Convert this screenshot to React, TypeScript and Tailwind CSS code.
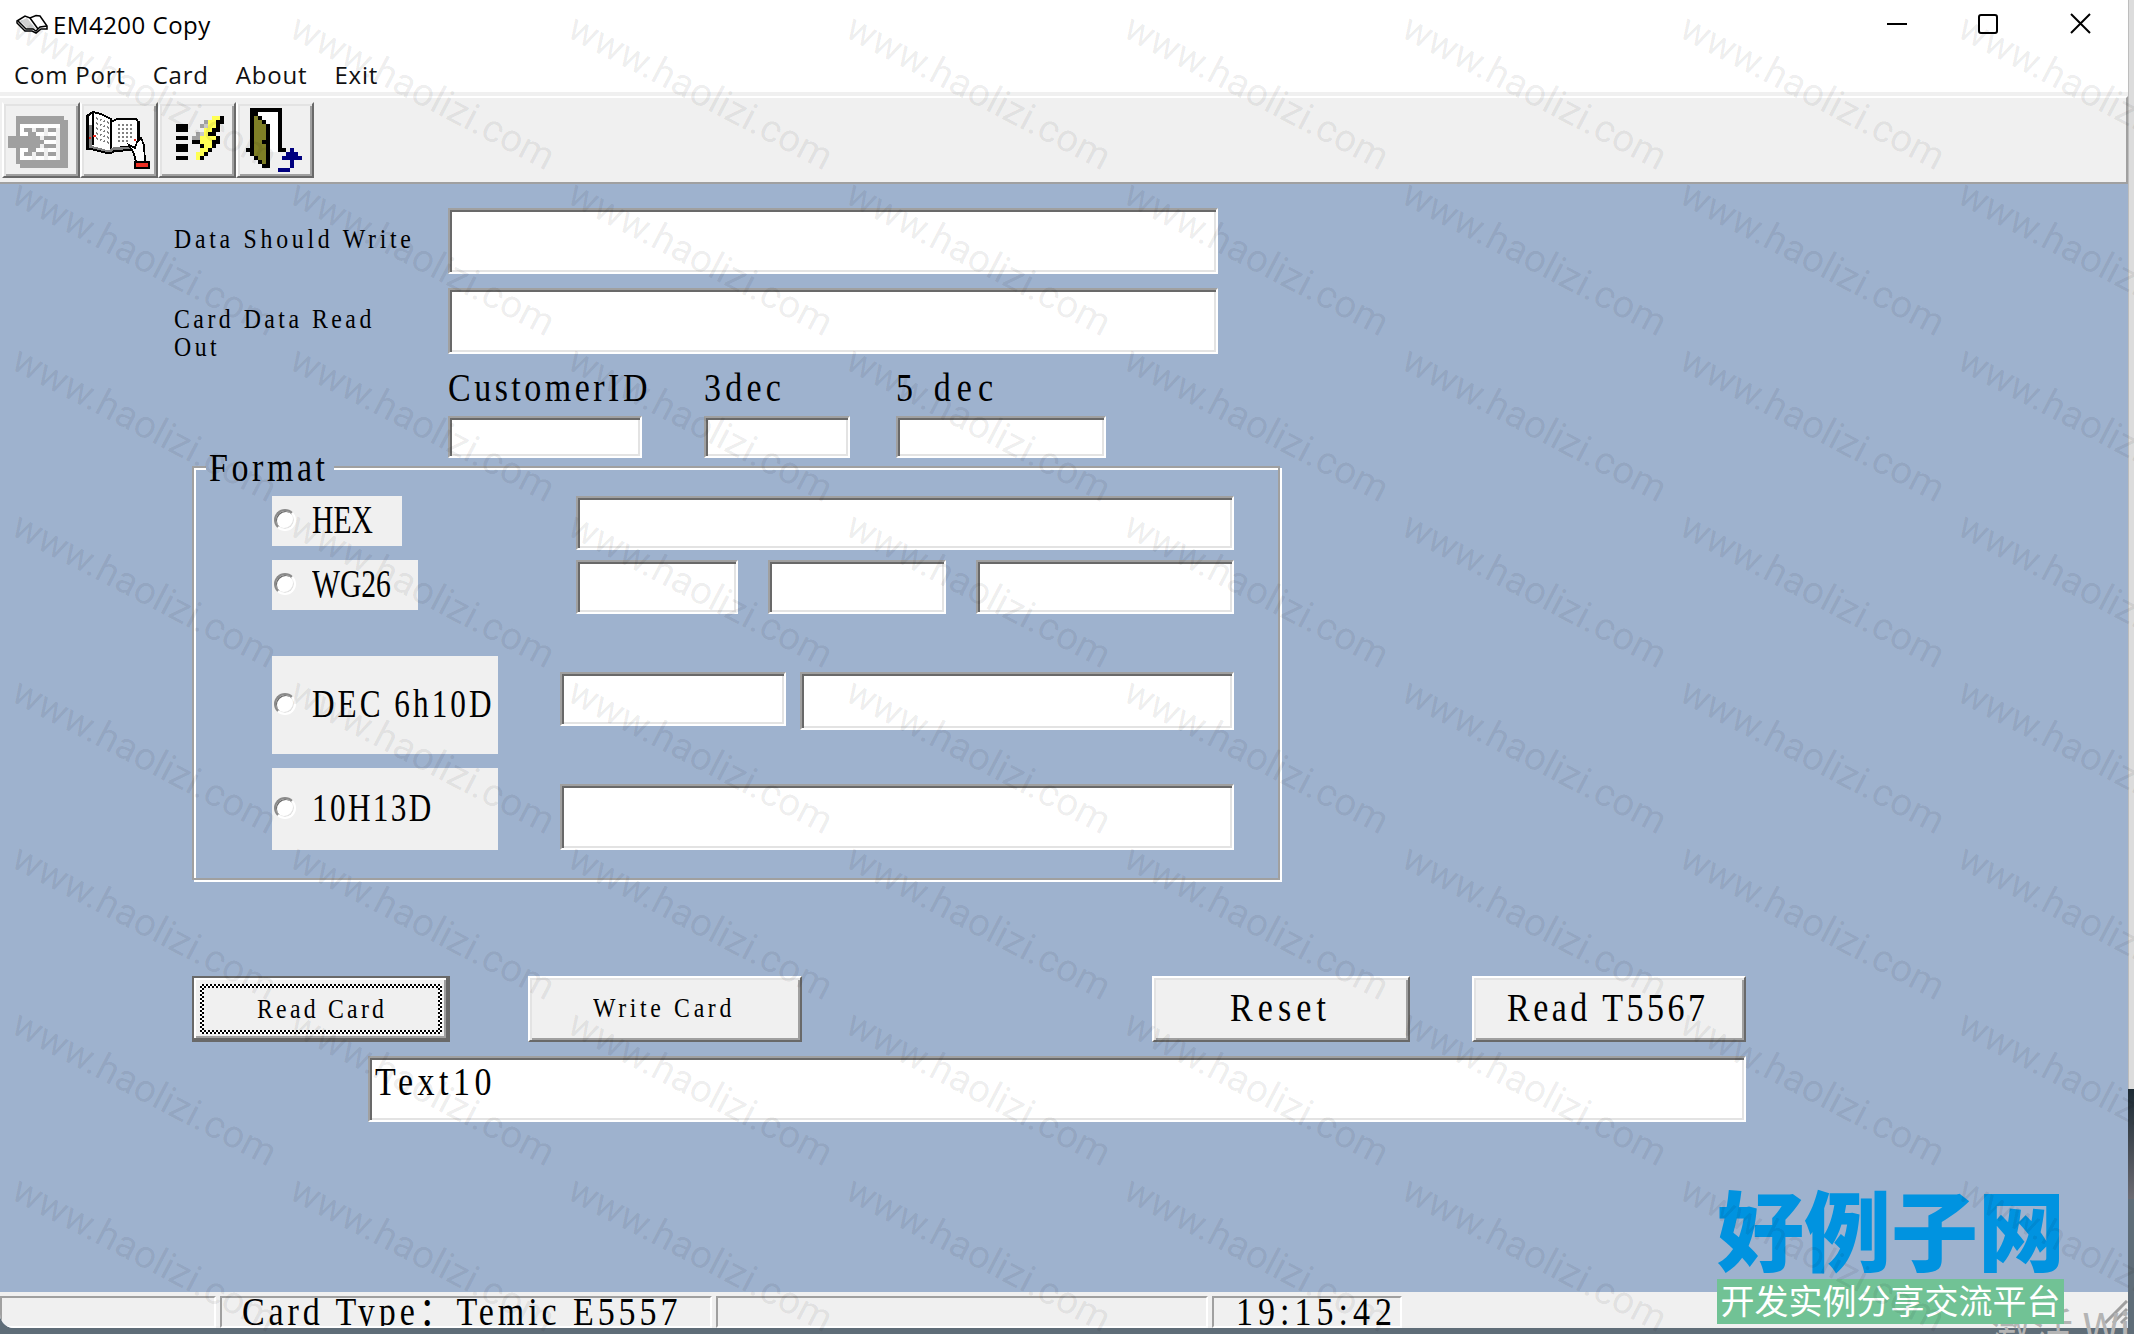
import type { ReactNode } from 'react';
import { clsx } from 'clsx';

const PALETTE: Record<string, string> = {
  B: '#000000',
  W: '#ffffff',
  Y: '#ffff54',
  G: '#a0a0a0',
  L: '#c8c8c8',
  O: '#7f7f26',
  N: '#00007f',
};

const FLASH = [
  '.........YYB',
  '.......GYYBB',
  'BBB...GLYYB.',
  'BBB....YYBB.',
  '.....GLYBB..',
  'BBB.GGYYYYB.',
  '....BBYYYBB.',
  'BBB...BYYB..',
  'BBB...YYB...',
  '.....YYB....',
  'BBB..YB.....',
];

const DOOR = [
  '.BBBBBBBB.....',
  '.BBWWWWWB.....',
  '.BOBWWWWB.....',
  '.BOOBWWWB.....',
  '.BOOOBWWB.....',
  '.BOOOBWWB.....',
  '.BOOOBWWB.....',
  '.BOOOBWWB.....',
  '.BOOBBWWB.....',
  '.BOOOBWWB.....',
  'BBOOOBWWBB.N..',
  '.BOOOB....NNN.',
  '..BOOB...NNNNN',
  '...BOB.....N..',
  '....BB.....N..',
  '........NNN...',
];

const TABLE = [
  '..GGGGGGGGGGGG.',
  '..GGGGGGGGGGGGG',
  '..GWWWWWWWWWWGG',
  '..GWGG.GG.GG.GG',
  '..GWWGGWW.WW.GG',
  'GGGGGGGG.GGG.GG',
  'GGGGGGGGGWWW.GG',
  'GGGGGGGG.GGG.GG',
  '..GWWGGWW.WW.GG',
  '..GWGG.GG.GG.GG',
  '..GWWW.WW.WW.GG',
  '..GGGGGGGGGGGGG',
  '...GGGGGGGGGGGG',
];

function PixelArt({ rows, className }: { rows: string[]; className?: string }) {
  return (
    <svg
      width={rows[0].length * 4}
      height={rows.length * 4}
      viewBox={`0 0 ${rows[0].length} ${rows.length}`}
      shapeRendering="crispEdges"
      className={className}
    >
      {rows.flatMap((row, y) =>
        row.split('').map((c, x) =>
          PALETTE[c] ? <rect key={`${x}-${y}`} x={x} y={y} width={1} height={1} fill={PALETTE[c]} /> : null
        )
      )}
    </svg>
  );
}

function BookIcon() {
  return (
    <svg width="66" height="60" viewBox="0 0 66 60" shapeRendering="crispEdges">
      <path d="M2 5 L8 1 L16 3 L26 8 V42 L6 38 H2 Z" fill="#fff" stroke="#000" strokeWidth="2" />
      <path d="M26 11 L32 8 H51 L54 12 V36 H36 L26 42 Z" fill="#fff" stroke="#000" strokeWidth="2" />
      <rect x="1" y="4" width="3" height="35" fill="#000" />
      <rect x="4" y="14" width="3" height="24" fill="#808080" />
      <rect x="7" y="2" width="2" height="32" fill="#000" />
      <path d="M5 36 L24 41 L28 38 L46 37" fill="none" stroke="#808080" strokeWidth="3" />
      <path d="M2 37 L22 42 L26 42 L30 40 L46 39" fill="none" stroke="#000" strokeWidth="2" />
      <rect x="52" y="10" width="3" height="22" fill="#000" />
      <path d="M11 7 L24 12 M11 12 L24 17 M11 17 L24 22 M11 22 L24 27 M11 27 L24 32" stroke="#808080" strokeWidth="2" strokeDasharray="2 2" />
      <path d="M33 14 H48 M33 18 H48 M33 22 H48 M33 26 H48 M33 30 H45" stroke="#808080" strokeWidth="2" strokeDasharray="2 2" />
      <rect x="4" y="26" width="2" height="2" fill="#e3271d" />
      <rect x="8" y="24" width="3" height="2" fill="#e3271d" />
      <rect x="49" y="28" width="2" height="2" fill="#e3271d" />
      <path d="M44 34 L50 37 L52 31 L56 27 L59 34 L60 51 H51 L49 43 Z" fill="#fff" stroke="#000" strokeWidth="1.8" />
      <rect x="50" y="51" width="14" height="6" fill="#ef3024" stroke="#000" strokeWidth="2" />
    </svg>
  );
}

function TitleIcon() {
  return (
    <svg width="32" height="22" viewBox="0 0 32 22">
      <path d="M1 7 L9 2 L14 4 L20 1.5 L24 2 L31 12 V15 L25 15 L20 19 L16 17 L9 17 L1 9 Z" fill="#fff" stroke="#000" strokeWidth="1.5" />
      <path d="M4 7 L11 4 L20 15 L12 15 Z" fill="#d0d0d0" />
      <path d="M14 4 L22 15 M2 7 L10 15 L17 15 L20 17 L24 13 L31 12" fill="none" stroke="#000" strokeWidth="1.5" />
    </svg>
  );
}

function ToolButton({ children }: { children: ReactNode }) {
  return (
    <button className="relative w-[78px] h-[76px] bg-[#f0f0f0] border-2 border-t-[#f0f0f0] border-l-white border-r-[#696969] border-b-[#696969] shadow-[inset_2px_2px_#e3e3e3,inset_-2px_-2px_#a0a0a0]">
      {children}
    </button>
  );
}

function TextBox({ className, children }: { className: string; children?: ReactNode }) {
  return (
    <div
      className={clsx(
        'shrink-0 bg-white border-2 border-t-[#a0a0a0] border-l-[#a0a0a0] border-r-white border-b-white shadow-[inset_2px_2px_#696969,inset_-2px_-2px_#e3e3e3]',
        className
      )}
    >
      {children}
    </div>
  );
}

// Narrow serif lettering used by the form labels
function Label({ children, className }: { children: ReactNode; className?: string }) {
  return <span className={clsx('inline-block origin-left scale-x-[0.85] whitespace-nowrap', className)}>{children}</span>;
}

function PushButton({ children, className }: { children: ReactNode; className: string }) {
  return (
    <button
      className={clsx(
        'h-[66px] shrink-0 bg-[#f0f0f0] pb-[2px] text-left border-2 border-t-white border-l-white border-r-[#696969] border-b-[#696969] shadow-[inset_2px_2px_#e3e3e3,inset_-2px_-2px_#a0a0a0]',
        className
      )}
    >
      {children}
    </button>
  );
}

function Option({ label, className, textClass }: { label: string; className: string; textClass: string }) {
  return (
    <label className={clsx('flex shrink-0 items-center bg-[#f0f0f0] pb-[2px] pl-[2px]', className)}>
      <span className="size-[22px] shrink-0 rounded-full bg-white border-2 border-t-[#8a8a8a] border-l-[#8a8a8a] border-r-white border-b-white shadow-[inset_1px_1px_#696969,inset_-1px_-1px_#e3e3e3]" />
      <span className={clsx('ml-4 origin-left whitespace-nowrap text-[40px] leading-[40px]', textClass)}>{label}</span>
    </label>
  );
}

function StatusPanel({ children, className }: { children?: ReactNode; className: string }) {
  return (
    <div
      className={clsx(
        'h-8 shrink-0 overflow-hidden whitespace-nowrap border-2 border-t-[#a0a0a0] border-l-[#a0a0a0] border-r-white border-b-white text-[40px] leading-[28px]',
        className
      )}
    >
      {children}
    </div>
  );
}

function Watermark() {
  return (
    <div className="pointer-events-none absolute inset-0 grid auto-rows-[166px] grid-cols-[repeat(8,278px)] overflow-hidden pl-[5px]">
      {Array.from({ length: 64 }, (_, i) => (
        <span
          key={i}
          className="h-[44px] w-0 origin-bottom-left rotate-[27.5deg] whitespace-nowrap font-[Roboto,sans-serif] text-[38.5px] leading-[44px] text-black/8"
        >
          www.haolizi.com
        </span>
      ))}
    </div>
  );
}

const menuItems = ['Com Port', 'Card', 'About', 'Exit'];

export default function App() {
  return (
    <div className="relative h-[1334px] w-[2134px] overflow-hidden bg-[#5f6d78] font-['Liberation_Serif','Noto_Sans_CJK_SC',serif] text-black">
      <div className="flex h-[1334px]">
        <div className="flex h-[1328px] w-[2128px] shrink-0 flex-col overflow-hidden rounded-bl-[14px] bg-[#9eb2ce]">
          {/* Title bar */}
          <div className="flex h-[50px] shrink-0 items-center bg-white pl-4 font-['Open_Sans',sans-serif]">
            <TitleIcon />
            <span className="ml-[5px] text-[24px] tracking-[0.5px]">EM4200 Copy</span>
            <svg className="ml-auto mr-[37px]" width="206" height="24" viewBox="0 0 206 24" fill="none" stroke="#000" strokeWidth="2">
              <path d="M2 11 H22" />
              <rect x="94" y="2" width="18" height="18" rx="2" />
              <path d="M186 1 L205 20 M205 1 L186 20" />
            </svg>
          </div>

          {/* Menu */}
          <div className="flex h-[42px] shrink-0 items-center gap-[27px] bg-white pl-[14px] pt-2 font-['Open_Sans',sans-serif] text-[24px] tracking-[0.8px] text-[#111]">
            {menuItems.map((item) => (
              <span key={item}>{item}</span>
            ))}
          </div>

          {/* Toolbar */}
          <div className="h-1 shrink-0 bg-[#f0f0f0]" />
          <div className="flex h-[88px] shrink-0 border-y-2 border-r-2 border-t-white border-r-[#a0a0a0] border-b-[#a0a0a0] bg-[#f0f0f0] pl-[2px] pt-1">
            <ToolButton>
              <PixelArt rows={TABLE} className="absolute left-1 top-3" />
            </ToolButton>
            <ToolButton>
              <span className="absolute left-[3px] top-[7px]">
                <BookIcon />
              </span>
            </ToolButton>
            <ToolButton>
              <PixelArt rows={FLASH} className="absolute left-4 top-3" />
            </ToolButton>
            <ToolButton>
              <PixelArt rows={DOOR} className="absolute left-2 top-1" />
            </ToolButton>
          </div>

          {/* Form */}
          <div className="flex h-[1108px] shrink-0 flex-col">
            <div className="mt-6 flex h-[66px] pl-[174px] text-[28px] leading-7">
              <div className="w-[274px] pt-[17px]">
                <Label className="tracking-[4.4px]">Data Should Write</Label>
              </div>
              <TextBox className="h-[66px] w-[770px]" />
            </div>
            <div className="mt-[14px] flex h-[66px] pl-[174px] text-[28px] leading-7">
              <div className="w-[274px] pt-[17px]">
                <Label className="tracking-[4.1px]">
                  Card Data Read
                  <br />
                  Out
                </Label>
              </div>
              <TextBox className="h-[66px] w-[770px]" />
            </div>
            <div className="flex pl-[448px] text-[40px] leading-[68px]">
              <div className="w-[256px]">
                <div className="h-[62px]">
                  <Label className="tracking-[4.1px]">CustomerID</Label>
                </div>
                <TextBox className="h-[42px] w-[194px]" />
              </div>
              <div className="w-[192px]">
                <div className="h-[62px]">
                  <Label className="tracking-[5px]">3dec</Label>
                </div>
                <TextBox className="h-[42px] w-[146px]" />
              </div>
              <div>
                <div className="h-[62px]">
                  <Label className="tracking-[7.2px]">5 dec</Label>
                </div>
                <TextBox className="h-[42px] w-[210px]" />
              </div>
            </div>

            {/* Format group */}
            <div className="relative ml-[192px] mt-2 h-[414px] w-[1088px] shrink-0 border-2 border-[#a0a0a0] pl-[78px] pt-[28px] shadow-[2px_2px_#fff,inset_2px_2px_#fff]">
              <span className="absolute -top-5 left-3 h-10 w-[128px] bg-[#9eb2ce] pl-[3px] text-[40px] leading-10">
                <Label className="tracking-[4.2px]">Format</Label>
              </span>
              <div className="flex h-16">
                <Option label="HEX" className="h-[50px] w-[130px]" textClass="scale-x-[0.74]" />
                <TextBox className="ml-[174px] h-[54px] w-[658px]" />
              </div>
              <div className="flex h-24">
                <Option label="WG26" className="h-[50px] w-[146px]" textClass="scale-x-[0.74]" />
                <TextBox className="ml-[158px] h-[54px] w-[162px]" />
                <TextBox className="ml-[30px] h-[54px] w-[178px]" />
                <TextBox className="ml-[30px] h-[54px] w-[258px]" />
              </div>
              <div className="flex h-[112px]">
                <Option label="DEC 6h10D" className="h-[98px] w-[226px]" textClass="scale-x-[0.78] tracking-[3.9px]" />
                <TextBox className="ml-[62px] mt-4 h-[54px] w-[226px]" />
                <TextBox className="ml-[14px] mt-4 h-[58px] w-[434px]" />
              </div>
              <div className="flex">
                <Option label="10H13D" className="h-[82px] w-[226px]" textClass="scale-x-[0.78] tracking-[3px]" />
                <TextBox className="ml-[62px] mt-4 h-[66px] w-[674px]" />
              </div>
            </div>

            <div className="mt-24 flex pl-[192px] text-[40px]">
              <button className="h-[66px] w-[258px] border-2 border-b-4 border-r-4 border-[#696969] bg-[#f0f0f0] pb-1 pl-[6px] pr-1 pt-[6px] text-left text-[28px] shadow-[inset_2px_2px_#fff,inset_-2px_-2px_#a0a0a0]">
                <span className="block h-[50px] w-[242px] bg-[repeating-conic-gradient(#000_0_25%,#fff_0_50%)] bg-[size:4px_4px] p-1">
                  <span className="flex h-[42px] items-center bg-[#f0f0f0] pl-[53px]">
                    <Label className="tracking-[3.8px]">Read Card</Label>
                  </span>
                </span>
              </button>
              <PushButton className="ml-[78px] w-[274px] pl-[63px] text-[28px]">
                <Label className="tracking-[4.3px]">Write Card</Label>
              </PushButton>
              <PushButton className="ml-[350px] w-[258px] pl-[76px]">
                <Label className="tracking-[6px]">Reset</Label>
              </PushButton>
              <PushButton className="ml-[62px] w-[274px] pl-[33px]">
                <Label className="tracking-[4.1px]">Read T5567</Label>
              </PushButton>
            </div>
            <TextBox className="ml-[368px] mt-[14px] h-[66px] w-[1378px] pl-[5px] pt-1 text-[40px] leading-10">
              <Label className="tracking-[5.3px]">Text10</Label>
            </TextBox>
          </div>

          {/* Status bar */}
          <div className="relative flex h-9 shrink-0 gap-1 bg-[#f0f0f0] pt-1">
            <StatusPanel className="w-[216px]" />
            <StatusPanel className="w-[492px] pl-5">
              <Label className="tracking-[4.6px]">Card Type：Temic E5557</Label>
            </StatusPanel>
            <StatusPanel className="w-[492px]" />
            <StatusPanel className="w-[190px] pl-[22px]">
              <Label className="tracking-[5.9px]">19:15:42</Label>
            </StatusPanel>
            <svg className="absolute bottom-1 right-0" width="24" height="24" viewBox="0 0 24 24" stroke="#a0a0a0" strokeWidth="3">
              <path d="M1 23 L23 1 M9 23 L23 9 M17 23 L23 17" />
            </svg>
          </div>
        </div>
        <div className="w-[6px] shrink-0">
          <div className="h-[1089px] border-l border-[#bdbdbd] bg-[#dcdcdc]" />
          <div className="h-[110px] bg-gradient-to-b from-[#1d2b34] to-[#6c6b72]" />
        </div>
      </div>

      <div className="absolute left-[1989px] top-[1302px] whitespace-nowrap font-['Noto_Sans_CJK_SC',sans-serif] text-[42px] leading-[48px] text-[#b4b4b4]">激活 Wi</div>

      {/* Site badge */}
      <div className="absolute left-[1717px] top-[1179px] w-[347px] whitespace-nowrap font-['Noto_Sans_CJK_SC',sans-serif]">
        <div className="h-[100px] text-[87px] font-black leading-[97px] text-[#0093e0]">好例子网</div>
        <div className="h-[45px] bg-[#71c295] text-center text-[34px] font-normal leading-[41px] text-white">开发实例分享交流平台</div>
      </div>

      <Watermark />
    </div>
  );
}
